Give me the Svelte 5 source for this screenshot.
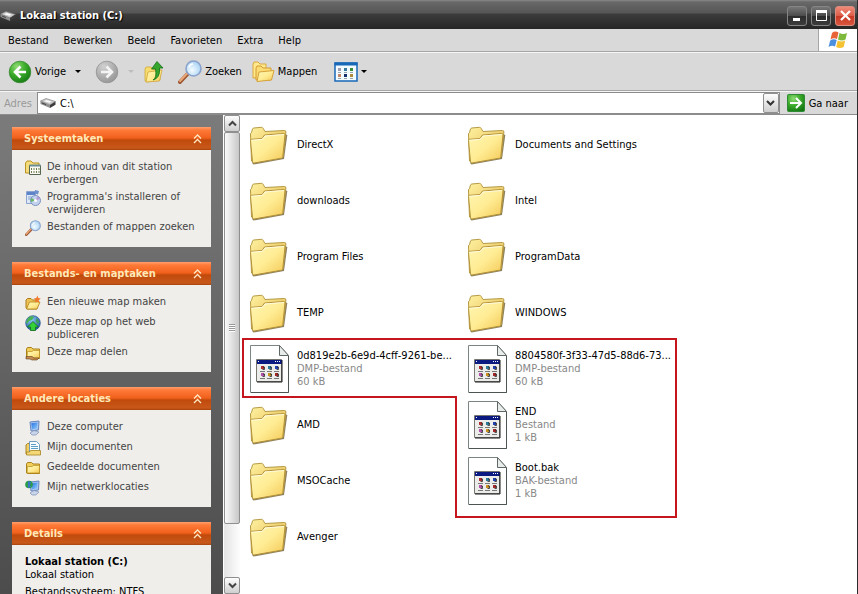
<script lang="ts">
    type Task = { icon: string; label: string };

    const menus = ['Bestand', 'Bewerken', 'Beeld', 'Favorieten', 'Extra', 'Help'];

    const panels: { title: string; tasks: Task[] }[] = [
        {
            title: 'Systeemtaken',
            tasks: [
                { icon: 'hide', label: 'De inhoud van dit station verbergen' },
                { icon: 'programs', label: "Programma's installeren of verwijderen" },
                { icon: 'search', label: 'Bestanden of mappen zoeken' }
            ]
        },
        {
            title: 'Bestands- en maptaken',
            tasks: [
                { icon: 'new', label: 'Een nieuwe map maken' },
                { icon: 'web', label: 'Deze map op het web publiceren' },
                { icon: 'share', label: 'Deze map delen' }
            ]
        },
        {
            title: 'Andere locaties',
            tasks: [
                { icon: 'computer', label: 'Deze computer' },
                { icon: 'documents', label: 'Mijn documenten' },
                { icon: 'folder', label: 'Gedeelde documenten' },
                { icon: 'network', label: 'Mijn netwerklocaties' }
            ]
        }
    ];

    const files: { name: string; type?: string; size?: string }[] = [
        { name: 'DirectX' },
        { name: 'downloads' },
        { name: 'Program Files' },
        { name: 'TEMP' },
        { name: '0d819e2b-6e9d-4cff-9261-be...', type: 'DMP-bestand', size: '60 kB' },
        { name: 'AMD' },
        { name: 'MSOCache' },
        { name: 'Avenger' },
        { name: 'Documents and Settings' },
        { name: 'Intel' },
        { name: 'ProgramData' },
        { name: 'WINDOWS' },
        { name: '8804580f-3f33-47d5-88d6-73...', type: 'DMP-bestand', size: '60 kB' },
        { name: 'END', type: 'Bestand', size: '1 kB' },
        { name: 'Boot.bak', type: 'BAK-bestand', size: '1 kB' }
    ];

    const dots = ['#b03030', '#2a7a9c', '#2340b0', '#b050a8', '#c89020', '#a02828'];

    let address = $state('C:\\');
</script>

{#snippet drive()}
    <svg class="drive" width="16" height="16" viewBox="0 0 16 16">
        <path d="M.5 6 6 3.500 15.500 6.500 10 10Z" fill="#c9c9c9" stroke="#777" stroke-width=".6" />
        <path d="M.5 6v3L10 13v-3Z" fill="#8f8f8f" />
        <path d="m10 10 5.500-3.500v3.300L10 13Z" fill="#3c3c3c" />
        <path d="m4 6.200 2.500-1.200 5 1.500-2 1.200Z" fill="#fafafa" />
        <path d="m2 8 4 1.600" stroke="#444" />
    </svg>
{/snippet}

{#snippet magnifier(size: number)}
    <svg width={size} height={size} viewBox="0 0 24 24">
        <path d="m2 22 8-8.500" stroke="#9c5833" stroke-width="4" stroke-linecap="round" />
        <path d="m2 21 7.500-8" stroke="#eca878" stroke-width="2" stroke-linecap="round" />
        <circle cx="15.500" cy="8.500" r="7.500" fill="url(#lens)" stroke="#8ba3cc" stroke-width="1.600" />
        <path d="M11 7.500c.5-2 2-3.500 4-3.500" fill="none" stroke="#fff" stroke-width="1.500" />
    </svg>
{/snippet}

{#snippet miniFolder()}
    <path d="M1.500 13V4l1-1.500h4L8 4h6.500v9.500h-12Z" fill="#f2cf5a" stroke="#a98118" />
    <path d="M2 13 2.500 6.500H7L8.500 5.500h6V13Z" fill="url(#sheet)" stroke="#b98e20" stroke-width=".7" />
{/snippet}

{#snippet monitor()}
    <path d="m5 2 9-1-.5 9-7.500 1Z" fill="#a9c6ee" stroke="#6787bd" />
    <path d="m6.300 3.200 6.200-.7-.5 6-5 .8Z" fill="url(#screen)" />
    <path d="m5 13 4-2.500 5 1.500-3 3H7Z" fill="#c9d5eb" stroke="#8091b5" stroke-width=".7" />
{/snippet}

{#snippet taskIcon(icon: string)}
    {#if icon === 'search'}
        {@render magnifier(16)}
    {:else}
        <svg width="16" height="16" viewBox="0 0 16 16">
            {#if icon === 'hide'}
                <path d="M.5 13V3L2 1h4l2 2h6v10Z" fill="#f5dc78" stroke="#b89325" />
                <path d="M4.500 5.500h11v9h-11Z" fill="#fafaf2" stroke="#566650" />
                <path d="M4.500 5.500h11" stroke="#6b8d96" stroke-width="2" />
                <path d="M6.500 8v5.500M9 8v5.500M11.500 8v5.500M14 8v5.500" stroke="#6f7f52" stroke-dasharray="2 1" />
            {:else if icon === 'programs'}
                <path d="M1.500 1.500h9v12h-9Z" fill="#dce8f8" stroke="#8ba5d0" />
                <path d="M2 2h8v3H2Z" fill="#5d83c8" />
                <path d="M3 7h5M3 9h4" stroke="#8aa6d2" />
                <circle cx="10.500" cy="10.500" r="5" fill="#c3d2ee" stroke="#7d92c0" />
                <path d="M10.500 10.500 6.500 8a5 5 0 0 0-.8 4Z" fill="#68b56c" />
                <path d="m10.500 10.500 2-4.500a5 5 0 0 1 2.500 3Z" fill="#b39bd6" />
                <circle cx="10.500" cy="10.500" r="1.500" fill="#fff" />
                <path d="m10 0 4 1-1 3.500-3.500-1Z" fill="#6d8fcc" />
            {:else if icon === 'new'}
                <path d="M1 13V5l1.500-1.500H6L7.500 5H12v9H2Z" fill="#eec356" stroke="#aa7c1b" />
                <path d="m1.500 14 3-7h10.500l-3 7Z" fill="url(#sheet)" stroke="#b3831a" stroke-width=".8" />
                <path d="m12.500.500.8 2.500 2.500.5-2 1.800.5 2.500-2.200-1.300-2.300 1 .7-2.500-1.700-1.500 2.500-.5Z" fill="#f17a2c" />
            {:else if icon === 'web'}
                <circle cx="8" cy="8" r="7.300" fill="url(#globe)" stroke="#1d4f8a" stroke-width=".7" />
                <path d="M3 3c2-2 5-2 6-1L7 5 4 6 2 9 1 7Z" fill="#49b156" />
                <path d="m12 3 2.500 4-2 2-2-3Z" fill="#3f9c58" />
                <path d="m8 6.500 5.500 5.500h-3v3.500h-5V12h-3Z" fill="#35cf38" stroke="#0e6f17" stroke-width=".8" />
            {:else if icon === 'share'}
                {@render miniFolder()}
                <path d="M1 11.500h6l2 1.500h5l-2 2H7l-2-1H1Z" fill="#c88c4c" stroke="#5c3d1d" stroke-width=".6" />
            {:else if icon === 'computer'}
                {@render monitor()}
            {:else if icon === 'documents'}
                <path d="M1 14V5l1.500-1.500H6V14Z" fill="#f2cf64" stroke="#a88424" />
                <path d="M4.500 1.500h7l3 3v8h-10Z" fill="#f8fcff" stroke="#6c9bbd" />
                <path d="M6 4.500h5M6 6.500h7M6 8.500h7" stroke="#5c9fc6" />
                <path d="M1.500 15v-3h3l1-1.500h10V15Z" fill="#f4d776" stroke="#a68320" stroke-width=".8" />
            {:else if icon === 'network'}
                {@render monitor()}
                <circle cx="4" cy="4.500" r="3.800" fill="#2c9c4a" />
                <path d="m3 1 3 1-1 3 1 2-3 1Z" fill="#3676c5" />
            {:else}
                {@render miniFolder()}
            {/if}
        </svg>
    {/if}
{/snippet}

{#snippet folder()}
    <svg width="48" height="48" viewBox="0 0 48 48">
        <path d="m7 42 1.500 1.500 30.500-5.500 3.300-24-1.300-.5Z" fill="#6f6238" opacity=".8" />
        <path d="M6.500 40 5.500 13q0-1 1-1.500L7.500 8q.4-.8 1.300-1l7.700-.7q1 0 1.600 1l1.900 3.200 19.500-1q1.500 0 1.400 1.500L38 36Z" fill="url(#folderBack)" stroke="#b59a45" />
        <path d="m7.500 41-2-21.500q0-1 1-1.200l10.500-.8 2.500-3.500 19-1.500q1.500 0 1.500 1.200l-2.200 22q0 1.200-1.300 1.500L9 42q-1.300.2-1.500-1Z" fill="url(#sheet)" stroke="#b4923a" />
        <path d="m6.500 19.300 11-1 2.500-3.300 19-1.500" fill="none" stroke="#fffbdc" />
    </svg>
{/snippet}

{#snippet filePage()}
    <svg width="48" height="48" viewBox="0 0 48 48">
        <path d="M5.500.5h29l9 10v37h-38Z" fill="#fff" stroke="#7b8581" />
        <path d="M6 47.500h37.500V11" fill="none" stroke="#4c5552" />
        <path d="M34.500.5v10h9Z" fill="#e8ecea" stroke="#5f6764" />
        <path d="M11.500 14.500h25v22h-25Z" fill="#ececea" stroke="#77776f" />
        <path d="M12 15h25v4H12Z" fill="#0a1a80" />
        <path d="M37 15v22H12" fill="none" stroke="#1a1a1a" />
        <path d="M13 16.500h1M30 16.500h1M32 16.500h1M34 16.500h1" stroke="#fff" />
        {#each dots as dot, i}
            <rect x={16 + (i % 3) * 7} y={21 + Math.floor(i / 3) * 7} width="3" height="3" fill={dot} />
            <path d="M{18 + (i % 3) * 7} {22 + Math.floor(i / 3) * 7}h1.500v2.500h-2" fill="none" stroke="#222" stroke-width=".8" />
            <path d="M{15 + (i % 3) * 7} {26.5 + Math.floor(i / 3) * 7}h5" stroke="#777" />
        {/each}
    </svg>
{/snippet}

{#snippet chevrons()}
    <svg width="9" height="10" viewBox="0 0 9 10" fill="none" stroke="#ffe9c4" stroke-width="1.300">
        <path d="m1 4.500 3.500-3.500L8 4.500M1 9l3.500-3.500L8 9" />
    </svg>
{/snippet}

{#snippet heading(title: string)}
    <h2>
        {title}
        <button aria-label="{title} samenvouwen">{@render chevrons()}</button>
    </h2>
{/snippet}

<svg class="defs" width="0" height="0" aria-hidden="true">
    <defs>
        <linearGradient id="sheet" x1="0" y1="0" x2="1" y2="1">
            <stop offset="0" stop-color="#fff7b4" /><stop offset=".5" stop-color="#ffec94" /><stop offset="1" stop-color="#f3c854" />
        </linearGradient>
        <linearGradient id="folderBack" x1="0" y1="0" x2="1" y2="1">
            <stop offset="0" stop-color="#fff1a0" /><stop offset="1" stop-color="#dfb447" />
        </linearGradient>
        <radialGradient id="green" cx=".35" cy=".25" r=".8">
            <stop offset="0" stop-color="#8fdc74" /><stop offset=".5" stop-color="#3bab2a" /><stop offset="1" stop-color="#167a14" />
        </radialGradient>
        <radialGradient id="grey" cx=".35" cy=".25" r=".8">
            <stop offset="0" stop-color="#d0d0d0" /><stop offset="1" stop-color="#969696" />
        </radialGradient>
        <radialGradient id="lens" cx=".4" cy=".6" r=".7">
            <stop offset="0" stop-color="#f4fcff" /><stop offset="1" stop-color="#9fcdf2" />
        </radialGradient>
        <radialGradient id="globe" cx=".4" cy=".3" r=".8">
            <stop offset="0" stop-color="#8cc8f4" /><stop offset="1" stop-color="#174f9e" />
        </radialGradient>
        <linearGradient id="screen" x1="0" y1="0" x2="1" y2="1">
            <stop offset="0" stop-color="#2a6fe0" /><stop offset="1" stop-color="#8ed0ff" />
        </linearGradient>
    </defs>
</svg>

<div class="window">
    <header class="titlebar">
        {@render drive()}
        <h1>Lokaal station (C:)</h1>
        <button aria-label="Minimaliseren">
            <svg width="17" height="17"><path d="M4 11h7v3H4Z" fill="#fff" /></svg>
        </button>
        <button aria-label="Maximaliseren">
            <svg width="17" height="17"><path d="M3.500 4.500v9h10v-9Z" fill="none" stroke="#fff" /><path d="M3 4.500h11" stroke="#fff" stroke-width="3" /></svg>
        </button>
        <button class="close" aria-label="Sluiten">
            <svg width="17" height="17"><path d="m4 4 9 9m0-9-9 9" stroke="#fff" stroke-width="2.200" /></svg>
        </button>
    </header>

    <nav class="menubar">
        {#each menus as menu}
            <button>{menu}</button>
        {/each}
        <div class="flag">
            <svg width="20" height="20" viewBox="0 0 20 20">
                <path d="M4 3q3-2.500 6.500-.5L9 9Q5.500 7.500 2.500 9.500Z" fill="#e8623a" />
                <path d="M11.500 3q3.500 2 7.500 0L17.500 9.500q-4 2-7.500 0Z" fill="#7dba3c" />
                <path d="M2.200 10.500q3-2 6.500-.5L7 16.500Q4 15 .5 17Z" fill="#4a8fe0" />
                <path d="M9.700 10.500q3.500 2 7.500 0L15.700 17q-4 2-7.500 0Z" fill="#f5c232" />
            </svg>
        </div>
    </nav>

    <div class="toolbar">
        <button class="back">
            <svg width="24" height="24" viewBox="0 0 24 24">
                <circle cx="12" cy="12" r="10.800" fill="url(#green)" stroke="#3a8a34" stroke-width=".8" />
                <path d="M18 12H7m5.500-5.500L7 12l5.500 5.500" fill="none" stroke="#fff" stroke-width="2.600" />
            </svg>
            Vorige
        </button>
        <button class="drop" aria-label="Vorige locaties"><span class="caret"></span></button>
        <button class="forward" aria-label="Volgende" disabled>
            <svg width="24" height="24" viewBox="0 0 24 24">
                <circle cx="12" cy="12" r="10.800" fill="url(#grey)" stroke="#929292" stroke-width=".8" />
                <path d="M6 12h11m-5.500-5.500L17 12l-5.500 5.500" fill="none" stroke="#f4f4f4" stroke-width="2.600" />
            </svg>
            <span class="caret faint"></span>
        </button>
        <button class="up" aria-label="Omhoog">
            <svg width="20" height="24" viewBox="0 0 20 24">
                <path d="M1 21V9l1-2h5l2 2h7v11L3 22Z" fill="#f7db6c" stroke="#cfa93c" stroke-width=".8" />
                <path d="m2 22 2-10 14-2-2.500 11Z" fill="url(#sheet)" stroke="#cfa640" stroke-width=".8" />
                <path d="M9 20q4-2 2.500-11H7.500L13 1.500l6 6.500h-3.500q1 10-6.500 12Z" fill="#35a52d" stroke="#18701a" stroke-width=".8" />
            </svg>
        </button>
        <button class="find">
            {@render magnifier(24)}
            Zoeken
        </button>
        <button class="folders">
            <svg width="24" height="24" viewBox="0 0 24 24">
                <path d="M2 18V4l1-2h4l2 2h6v13Z" fill="#ffe98c" stroke="#dba83e" />
                <path d="M5 20V8l1-2h4l2 2h8v12Z" fill="#fbdb74" stroke="#d39c34" />
                <path d="M6 21.500 8 12l15-1.500-2.500 9.500Z" fill="url(#sheet)" stroke="#d6a23a" />
            </svg>
            Mappen
        </button>
        <button class="views" aria-label="Weergaven">
            <svg width="24" height="20" viewBox="0 0 24 20">
                <path d="M1 1h22v18H1Z" fill="#f2fbff" stroke="#1868b8" stroke-width="1.500" />
                <path d="M.5.5h23v3H.5Z" fill="#1868b8" />
                <path d="M4 6h3v3H4Z" fill="#a09ab0" /><path d="M4 12h3v3H4Z" fill="#c48468" />
                <path d="M10 6h3v3h-3Z" fill="#3a7a9c" /><path d="M10 12h3v3h-3Z" fill="#16306c" />
                <path d="M16 6h3v3h-3Z" fill="#3a8a36" /><path d="M16 12h3v3h-3Z" fill="#b08c3a" />
                <path d="M4 10.500h3m3 0h3m3 0h3M4 16.500h3m3 0h3m3 0h3" stroke="#9aa4ac" />
            </svg>
            <span class="caret"></span>
        </button>
    </div>

    <form class="addressbar" onsubmit={(e) => e.preventDefault()}>
        <label for="address">Adres</label>
        <div class="field">
            {@render drive()}
            <input id="address" bind:value={address} spellcheck="false" />
            <button class="scroll-button" type="button" aria-label="Adreslijst">
                <svg width="9" height="7"><path d="m1 1 3.500 3.500L8 1" fill="none" stroke="#333" stroke-width="2" /></svg>
            </button>
        </div>
        <button class="go">
            <svg width="18" height="18" viewBox="0 0 18 18">
                <rect x=".5" y=".5" width="17" height="17" rx="1" fill="url(#green)" stroke="#2f8a35" />
                <path d="M3 9h10.500M9 4l5 5-5 5" fill="none" stroke="#fff" stroke-width="2" />
            </svg>
            Ga naar
        </button>
    </form>

    <div class="content">
        <aside>
            {#each panels as panel}
                <section>
                    {@render heading(panel.title)}
                    <ul>
                        {#each panel.tasks as task}
                            <li>
                                {@render taskIcon(task.icon)}
                                <a href="#task">{task.label}</a>
                            </li>
                        {/each}
                    </ul>
                </section>
            {/each}
            <section>
                {@render heading('Details')}
                <div class="details">
                    <strong>Lokaal station (C:)</strong>
                    <p>Lokaal station</p>
                    <p class="spaced">Bestandssysteem: NTFS</p>
                </div>
            </section>
        </aside>

        <div class="scrollbar">
            <button class="scroll-button" aria-label="Omhoog schuiven">
                <svg width="9" height="7"><path d="m1 5.500 3.500-3.500L8 5.500" fill="none" stroke="#444" stroke-width="2" /></svg>
            </button>
            <div class="track">
                <div class="thumb"><span></span></div>
            </div>
            <button class="scroll-button" aria-label="Omlaag schuiven">
                <svg width="9" height="7"><path d="m1 1.500 3.500 3.500L8 1.500" fill="none" stroke="#444" stroke-width="2" /></svg>
            </button>
        </div>

        <main>
            <ul class="files">
                {#each files as file}
                    <li>
                        {#if file.type}
                            {@render filePage()}
                        {:else}
                            {@render folder()}
                        {/if}
                        <div class="info">
                            <span>{file.name}</span>
                            {#if file.type}
                                <small>{file.type}</small>
                                <small>{file.size}</small>
                            {/if}
                        </div>
                    </li>
                {/each}
            </ul>
            <svg class="outline" width="436" height="182" viewBox="0 0 436 182">
                <path d="M1 1h433v178H214V59H1Z" fill="none" stroke="#c4161c" stroke-width="2" />
            </svg>
        </main>
    </div>
</div>

<style>
    :global(body) {
        margin: 0;
    }

    .window {
        display: flex;
        flex-direction: column;
        height: 100vh;
        overflow: hidden;
        box-sizing: border-box;
        border-right: 1px solid #2c2c2c;
        background: #d9d9d9;
        color: #000;
        font: 11px/13px Tahoma, "DejaVu Sans Condensed", "DejaVu Sans", sans-serif;
    }

    .defs {
        position: absolute;
    }

    svg {
        display: block;
        flex: none;
    }

    button {
        display: flex;
        align-items: center;
        padding: 0;
        border: none;
        background: none;
        color: inherit;
        font: inherit;
        white-space: nowrap;
    }

    ul,
    p,
    h1,
    h2 {
        margin: 0;
        padding: 0;
        list-style: none;
    }

    .titlebar {
        display: flex;
        align-items: center;
        gap: 4px;
        flex: none;
        height: 29px;
        padding: 2px 2px 0 0;
        box-sizing: border-box;
        background: linear-gradient(#8a8a8a 0, #686868 2px, #565656 13px, #3c3c3c 14px, #262626 29px);
    }

    h1 {
        flex: 1;
        color: #fff;
        font-size: 11px;
        text-shadow: 1px 1px 1px #000;
    }

    .titlebar button {
        justify-content: center;
        width: 20px;
        height: 20px;
        border: 1px solid #858585;
        border-radius: 3px;
        background: linear-gradient(#777, #4a4a4a 50%, #2c2c2c 50%, #3c3c3c);
    }

    .titlebar .close {
        border-color: #d98c80;
        background: linear-gradient(#ee8a78, #dc5c48 50%, #c73824 50%, #d9563e);
    }

    .menubar {
        display: flex;
        gap: 15px;
        flex: none;
        height: 22px;
        padding-left: 8px;
        border-bottom: 1px solid #a6a6a6;
    }

    .flag {
        display: flex;
        align-items: center;
        justify-content: center;
        width: 38px;
        margin-left: auto;
        border-left: 1px solid #a6a6a6;
        background: #fff;
    }

    .toolbar {
        display: flex;
        align-items: center;
        flex: none;
        height: 37px;
        padding-left: 8px;
        border-top: 1px solid #f6f6f6;
        border-bottom: 1px solid #a6a6a6;
    }

    .toolbar button {
        gap: 3px;
    }

    .toolbar .drop {
        margin: 0 14px 0 9px;
    }

    .toolbar .forward {
        gap: 9px;
    }

    .toolbar .up {
        margin: 0 14px 0 10px;
    }

    .toolbar .folders {
        margin: 0 17px 0 9px;
    }

    .caret {
        border: 3px solid transparent;
        border-top-color: #000;
        border-bottom: none;
    }

    .faint {
        border-top-color: #bdbdbd;
    }

    .addressbar {
        display: flex;
        align-items: center;
        flex: none;
        height: 23px;
        padding: 0 9px 0 4px;
        border-top: 1px solid #f6f6f6;
        box-sizing: border-box;
    }

    .addressbar label {
        width: 33px;
        color: #9a9a9a;
    }

    .field {
        display: flex;
        align-items: center;
        flex: 1;
        height: 20px;
        padding-left: 2px;
        border: 1px solid #8c8c8c;
        background: #fff;
    }

    input {
        flex: 1;
        min-width: 0;
        padding: 0 4px;
        border: none;
        outline: none;
        background: none;
        font: inherit;
    }

    .scroll-button {
        justify-content: center;
        flex: none;
        width: 16px;
        height: 17px;
        border: 1px solid #8f8f8f;
        border-radius: 2px;
        background: linear-gradient(#fdfdfd, #cfcfcf);
    }

    .field .scroll-button {
        height: 20px;
    }

    .go {
        gap: 4px;
        margin-left: 7px;
    }

    .content {
        display: flex;
        flex: 1;
        min-height: 0;
        border-top: 1px solid #8c8c8c;
    }

    aside {
        display: flex;
        flex-direction: column;
        gap: 15px;
        flex: none;
        width: 199px;
        padding: 12px;
        overflow: hidden;
        background: linear-gradient(#7b7b7b, #4c4c4c);
    }

    section {
        flex: none;
        color: #444;
    }

    h2 {
        display: flex;
        align-items: center;
        justify-content: space-between;
        height: 23px;
        padding: 0 9px 0 12px;
        background: linear-gradient(#ffa070 0, #ff7a38 3px, #f0601c 11px, #c04a0c 13px, #c8581a 21px, #a8430c 23px);
        color: #ffe9b8;
        font-size: 11px;
    }

    section ul,
    .details {
        padding: 10px 13px 11px;
        background: #efeeeb;
    }

    section ul {
        display: grid;
        gap: 4px;
    }

    section li {
        display: flex;
        gap: 6px;
        min-height: 16px;
    }

    a {
        color: #444;
        text-decoration: none;
    }

    .details {
        color: #000;
    }

    .details strong {
        display: block;
    }

    .spaced {
        margin-top: 4px;
    }

    .scrollbar {
        display: flex;
        flex-direction: column;
        flex: none;
        width: 16px;
        border-left: 1px solid #fff;
        background: #f0f0f0;
    }

    .track {
        flex: 1;
        background: linear-gradient(90deg, #e4e4e4, #fdfdfd);
    }

    .thumb {
        display: flex;
        align-items: center;
        justify-content: center;
        height: 88%;
        box-sizing: border-box;
        border: 1px solid #8f8f8f;
        border-radius: 2px;
        background: linear-gradient(90deg, #fafafa, #c8c8c8);
    }

    .thumb span {
        width: 6px;
        height: 8px;
        background: repeating-linear-gradient(#999 0 1px, #fff 1px 2px);
    }

    main {
        position: relative;
        flex: 1;
        min-width: 0;
        padding: 6px 5px;
        overflow: hidden;
        background: #fff;
    }

    .files {
        display: grid;
        grid-auto-flow: column;
        grid-template-rows: repeat(8, 48px);
        grid-auto-columns: 210px;
        gap: 8px;
    }

    .files li {
        display: flex;
        align-items: center;
        gap: 4px;
    }

    .info {
        display: flex;
        flex-direction: column;
        padding-bottom: 2px;
        white-space: nowrap;
    }

    small {
        color: #888;
        font-size: 11px;
    }

    /* Marks the suspicious files inside the folder view */
    .outline {
        position: absolute;
        top: 223px;
        left: 2px;
        pointer-events: none;
    }
</style>
